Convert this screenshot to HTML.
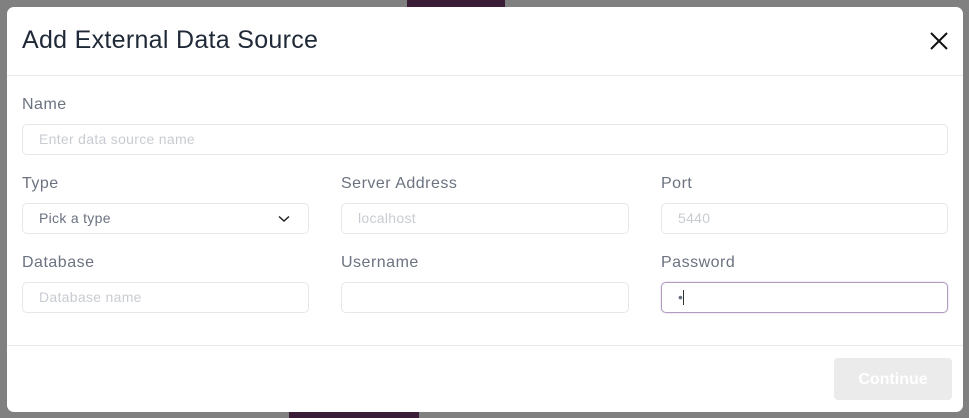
<!DOCTYPE html>
<html><head><style>
html,body{margin:0;padding:0;width:969px;height:418px;overflow:hidden;background:#808080;font-family:"Liberation Sans",Arial,sans-serif;position:relative}
.bgtab{position:absolute;left:407px;top:0;width:98px;height:7px;background:#3a1d37}
.bgtab2{position:absolute;left:289px;top:412px;width:130px;height:6px;background:#3a1d37}
.modal{position:absolute;left:7px;top:7px;width:956px;height:405px;background:#fff;border-radius:7px}
h1{position:absolute;left:15px;top:19px;margin:0;font-size:25px;font-weight:normal;color:#1f2937;letter-spacing:0.3px}
.close{position:absolute;left:922px;top:24px}
.hr{position:absolute;left:0;width:956px;height:1px;background:#e9eaee}
.lbl{position:absolute;font-size:16px;color:#6b7280;letter-spacing:0.5px}
.inp{position:absolute;height:31px;border:1px solid #e5e7eb;border-radius:5px;box-sizing:border-box;font-size:14px;color:#c8ccd2;padding-left:16px;line-height:29px;letter-spacing:0.3px}
.btn{position:absolute;left:827px;top:351px;width:118px;height:42px;background:#ebebeb;border-radius:4px;color:#fff;font-size:16px;font-weight:bold;text-align:center;line-height:44px}
</style></head><body>
<div class="bgtab"></div><div class="bgtab2"></div>
<div class="modal">
<h1>Add External Data Source</h1>
<svg class="close" width="20" height="20" viewBox="0 0 20 20"><path d="M2 2L18 18M18 2L2 18" stroke="#111" stroke-width="2"/></svg>
<div class="hr" style="top:68px"></div>
<div class="lbl" style="left:15px;top:89px">Name</div>
<div class="inp" style="left:15px;top:117px;width:926px">Enter data source name</div>
<div class="lbl" style="left:15px;top:168px">Type</div>
<div class="inp" style="left:15px;top:196px;width:287px;color:#6b7280">Pick a type
<svg style="position:absolute;left:255px;top:11px" width="12" height="8" viewBox="0 0 12 8"><path d="M1 1.5L6 6L11 1.5" stroke="#222" stroke-width="1.5" fill="none"/></svg></div>
<div class="lbl" style="left:334px;top:168px">Server Address</div>
<div class="inp" style="left:334px;top:196px;width:288px">localhost</div>
<div class="lbl" style="left:654px;top:168px">Port</div>
<div class="inp" style="left:654px;top:196px;width:287px">5440</div>
<div class="lbl" style="left:15px;top:247px">Database</div>
<div class="inp" style="left:15px;top:275px;width:287px">Database name</div>
<div class="lbl" style="left:334px;top:247px">Username</div>
<div class="inp" style="left:334px;top:275px;width:288px"></div>
<div class="lbl" style="left:654px;top:247px">Password</div>
<div class="inp" style="left:654px;top:275px;width:287px;border-color:#b39bc0;box-shadow:0 0 2px #d8cbe2;color:#6b7280">•<span style="display:inline-block;width:1px;height:15px;background:#333;vertical-align:-3px"></span></div>
<div class="hr" style="top:338px"></div>
<div class="btn">Continue</div>
</div>
</body></html>
